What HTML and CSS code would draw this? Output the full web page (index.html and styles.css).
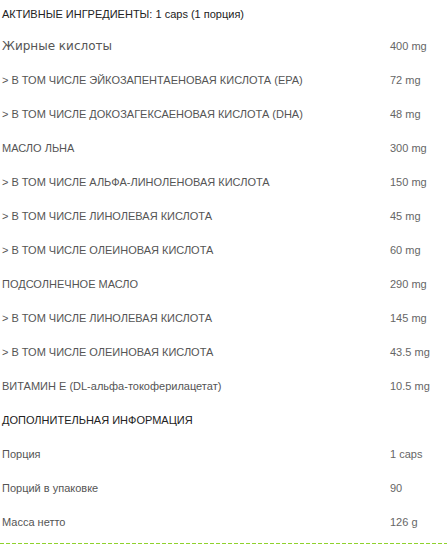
FILE: index.html
```html
<!DOCTYPE html>
<html lang="ru">

<head>
    <meta charset="UTF-8">
    <title>Состав</title>
    <link rel="stylesheet" href="styles.css">
</head>

<body>
    <section class="facts">
        <div class="facts-title">АКТИВНЫЕ ИНГРЕДИЕНТЫ: 1 caps (1 порция)</div>
        <table class="facts-table">
            <tr class="big"><td>Жирные кислоты</td><td class="val">400 mg</td></tr>
            <tr><td>&gt; В ТОМ ЧИСЛЕ ЭЙКОЗАПЕНТАЕНОВАЯ КИСЛОТА (EPA)</td><td class="val">72 mg</td></tr>
            <tr><td>&gt; В ТОМ ЧИСЛЕ ДОКОЗАГЕКСАЕНОВАЯ КИСЛОТА (DHA)</td><td class="val">48 mg</td></tr>
            <tr><td>МАСЛО ЛЬНА</td><td class="val">300 mg</td></tr>
            <tr><td>&gt; В ТОМ ЧИСЛЕ АЛЬФА-ЛИНОЛЕНОВАЯ КИСЛОТА</td><td class="val">150 mg</td></tr>
            <tr><td>&gt; В ТОМ ЧИСЛЕ ЛИНОЛЕВАЯ КИСЛОТА</td><td class="val">45 mg</td></tr>
            <tr><td>&gt; В ТОМ ЧИСЛЕ ОЛЕИНОВАЯ КИСЛОТА</td><td class="val">60 mg</td></tr>
            <tr><td>ПОДСОЛНЕЧНОЕ МАСЛО</td><td class="val">290 mg</td></tr>
            <tr><td>&gt; В ТОМ ЧИСЛЕ ЛИНОЛЕВАЯ КИСЛОТА</td><td class="val">145 mg</td></tr>
            <tr><td>&gt; В ТОМ ЧИСЛЕ ОЛЕИНОВАЯ КИСЛОТА</td><td class="val">43.5 mg</td></tr>
            <tr><td>ВИТАМИН E (DL-альфа-токоферилацетат)</td><td class="val">10.5 mg</td></tr>
            <tr class="head"><td colspan="2">ДОПОЛНИТЕЛЬНАЯ ИНФОРМАЦИЯ</td></tr>
            <tr><td>Порция</td><td class="val">1 caps</td></tr>
            <tr><td>Порций в упаковке</td><td class="val">90</td></tr>
            <tr><td>Масса нетто</td><td class="val">126 g</td></tr>
        </table>
        <div class="divider"></div>
    </section>
</body>

</html>
```

FILE: styles.css
```css
body {
    margin: 0;
    padding: 0;
    background: #fff;
    font-family: "Liberation Sans", Arial, sans-serif;
    font-size: 11px;
    color: #555;
}

.facts {
    width: 447px;
}

.facts-title {
    height: 29px;
    line-height: 29px;
    padding-left: 2px;
    color: #222;
}

.facts-table {
    width: 100%;
    border-collapse: collapse;
}

.facts-table td {
    height: 34px;
    padding: 0 0 0 2px;
    vertical-align: middle;
}

.facts-table .val {
    width: 57px;
    padding-left: 0;
    color: #666;
}

.big td:first-child {
    font-family: "DejaVu Sans", Verdana, sans-serif;
    font-size: 12px;
    color: #555;
}

.head td {
    color: #222;
}

.divider {
    height: 1px;
    margin-top: 4px;
    background: repeating-linear-gradient(90deg, #8fd22e 0 4px, transparent 4px 6px);
}
```
